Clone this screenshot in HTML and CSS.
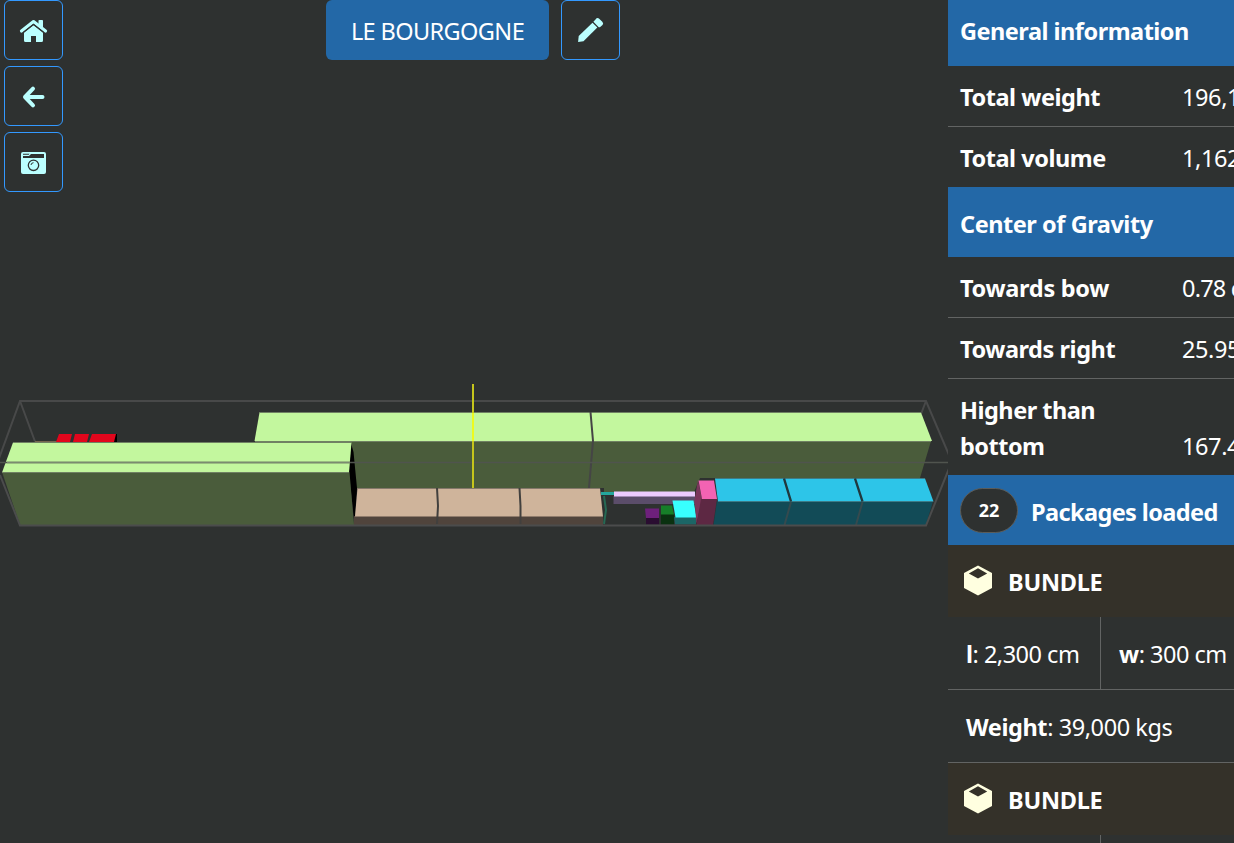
FILE: index.html
```html
<!DOCTYPE html>
<html lang="en">
<head>
<meta charset="utf-8">
<title>Le Bourgogne</title>
<link rel="stylesheet" href="styles.css">
</head>
<body>
<div class="app">
  <main class="viewer">
    <svg class="scene" width="948" height="843" viewBox="0 0 948 843">
      <g fill="none" stroke="#484949" stroke-width="2">
        <path d="M-6 472 20 401H926L952 462"/>
        <path d="M20 401 35 441.500M926 401 921 414"/>
      </g>
      <path d="M35 441.500H57" stroke="#75654f"/>
      <path d="M114 434h3v8h-4z" fill="#000"/>
      <path d="M59 434h13l-2 8H56zM75 434h14l-2 8H73zM92 434h24l-2 8H89z" fill="#e2061c"/>
      <path d="M255 441H931L920 478H700L694 492H604V488H355L351 441z" fill="#4a5c3b"/>
      <path d="M259.500 412.500H921L932 441H254.500z" fill="#c3f79e"/>
      <path d="M259 412.500H921M255 441.500H931" stroke="#708163"/>
      <path d="M590.500 412 593 441 589 488" fill="none" stroke="#454545" stroke-width="2"/>
      <path d="M351 443 353.500 452 357 488 354.500 524 349 473z" fill="#000"/>
      <path d="M2 472H349.500L354 525H20z" fill="#4a5c3b"/>
      <path d="M13 442.500H351.500L349 472.500H2z" fill="#c3f79e"/>
      <path d="M13 442.500H351M2 472.500H349" stroke="#708163"/>
      <path d="M0 462.500H948" stroke="#50544e" stroke-width="1.500"/>
      <path d="M7 462.500H350" stroke="#7b8b70" stroke-width="1.500"/>
      <path d="M354 516H603V525H354z" fill="#50443c"/>
      <path d="M357.500 488H600L603 516.500H355z" fill="#cfb49b"/>
      <path d="M357 488.500H600" stroke="#85786a"/>
      <path d="M437 488 438 506 437 524M519.500 488 520.500 506V524" fill="none" stroke="#42403e" stroke-width="2"/>
      <path d="M601 492h13v3h-13z" fill="#24a69c"/>
      <path d="M604 496 606 510 604 524" fill="none" stroke="#266954" stroke-width="2"/>
      <path d="M613.500 496H695V504H613.500z" fill="#5b4d6a"/>
      <path d="M614 491.500H695V496.500H614z" fill="#eccbff"/>
      <path d="M646 518h13v6.500h-13z" fill="#2a0d31"/>
      <path d="M645 508.500h14v9.500h-13z" fill="#6e207c"/>
      <path d="M661 514h13v10.500h-13z" fill="#0a3110"/>
      <path d="M661 505.500h11l2 9h-13z" fill="#167f28"/>
      <path d="M674 517h22v7.500h-21z" fill="#1b6666"/>
      <path d="M672.500 500.500h21l3 17h-21z" fill="#38ffff"/>
      <path d="M698 480 702 499 696.500 524 694.500 500z" fill="#7b365b"/>
      <path d="M701 499H717L713 525H696.500z" fill="#5d2843"/>
      <path d="M698.500 480.500H714L717 499H702z" fill="#f363b3"/>
      <path d="M717 501H933L926 525H713.500z" fill="#124b57"/>
      <path d="M715 478.500H925L933.500 501.500H718z" fill="#2dc5e8"/>
      <path d="M715 478.500H925M718 501.500H933" stroke="#3d7c87"/>
      <path d="M784 478.500 791 501.500M855 478.500 862.500 501.500" stroke="#20383e" stroke-width="2.400"/>
      <path d="M791 502 784.500 525M862.500 502 856 525" stroke="#354a4e" stroke-width="2"/>
      <path d="M0 475 20 525.500H926L950 466" fill="none" stroke="#4b4c4c" stroke-width="2"/>
      <path d="M473 384V488" stroke="#c5c51c" stroke-width="2"/>
      <path d="M473 413V441" stroke="#edfb20" stroke-width="2"/>
    </svg>
    <nav class="tools">
      <button class="icon-button" aria-label="Home">
        <svg width="31" height="30" viewBox="-.5 0 31 30"><path class="glyph" d="M20 4.800Q20 4 20.800 4H23.700Q24.500 4 24.500 4.800V14L20 10z"/><path class="line" d="M3 15 15 5.600 27 15" stroke-width="3.200"/><path class="glyph" d="M5.500 16.500 15 9.300 24.500 16.500V24.500Q24.500 26 23 26H17.500V20H12.500V26H7Q5.500 26 5.500 24.500z"/><path d="M4.500 16.700 15 8.400 25.500 16.700" fill="none" stroke="#2e3130" stroke-width="1.200"/></svg>
      </button>
      <button class="icon-button" aria-label="Back">
        <svg width="31" height="30" viewBox="-.5 0 31 30"><path class="line" d="M14.500 6.700 6.500 15 14.500 23.300M6.500 15H24" stroke-width="4"/></svg>
      </button>
      <button class="icon-button" aria-label="Capture">
        <svg width="31" height="30" viewBox="-.5 0 31 30"><rect class="glyph" x="2.500" y="4" width="25" height="22" rx="2"/><path class="cut" d="M4.500 10V8H10.500L12.500 6H25.500V10z"/><path class="cut" d="M4.500 5.700H11L10.300 6.800H4.500z"/><circle cx="15" cy="17.300" r="5.200" fill="none" stroke="#2e3130" stroke-width="1.300"/><path d="M12.500 17Q12.700 14.800 15 14.700" fill="none" stroke="#2e3130"/></svg>
      </button>
    </nav>
    <header class="title-bar">
      <button class="title">LE BOURGOGNE</button>
      <button class="icon-button" aria-label="Edit">
        <svg width="31" height="30" viewBox="-.5 0 31 30"><path class="glyph" d="M2.600 26 3.200 20 17 6.700 21.800 11.600 8 25.200z"/><path class="glyph" d="M17.900 5.800 20 3.600Q21.600 1.200 23.700 2.700L26.800 5.800Q28.500 7.400 27 9.100L24.700 11Q23.600 11.600 23 11z"/></svg>
      </button>
    </header>
  </main>
  <aside class="panel">
    <h2 class="heading first"><span class="t-general">General information</span></h2>
    <dl class="row"><dt>Total weight</dt><dd>196,1</dd></dl>
    <dl class="row last"><dt>Total volume</dt><dd>1,162</dd></dl>
    <h2 class="heading"><span>Center of Gravity</span></h2>
    <dl class="row"><dt class="t-bow">Towards bow</dt><dd class="v-bow">0.78 cm</dd></dl>
    <dl class="row"><dt>Towards right</dt><dd>25.95</dd></dl>
    <dl class="row tall"><dt class="t-higher">Higher than<br>bottom</dt><dd>167.4</dd></dl>
    <h2 class="heading packages"><span class="badge">22</span><span class="t-packages">Packages loaded</span></h2>
    <section class="package">
      <h3 class="bundle"><svg class="cube" width="30" height="32" viewBox="0 0 30 32"><path fill="#ffffe0" fill-rule="evenodd" d="M15 0.500 29 8V23L15 30.500 1 23V8zM15 3.300 5.800 8.500 15 13.500 24.200 8.500z"/></svg><span>BUNDLE</span></h3>
      <div class="dims"><div class="length"><b>l</b>: 2,300 cm</div><div class="width"><b>w</b>: 300 cm</div></div>
      <div class="load"><b>Weight</b>: 39,000 kgs</div>
    </section>
    <section class="package">
      <h3 class="bundle"><svg class="cube" width="30" height="32" viewBox="0 0 30 32"><path fill="#ffffe0" fill-rule="evenodd" d="M15 0.500 29 8V23L15 30.500 1 23V8zM15 3.300 5.800 8.500 15 13.500 24.200 8.500z"/></svg><span>BUNDLE</span></h3>
      <div class="dims"><div class="length"></div><div class="width"></div></div>
    </section>
  </aside>
</div>
</body>
</html>
```
FILE: styles.css
```css
* { box-sizing: border-box; }
body { margin: 0; overflow: hidden; background: #2e3130; color: #fff; font: 23.5px/36px "Noto Sans", "Open Sans", sans-serif; }
h2, h3, dl, dd { margin: 0; font-size: inherit; }
button { font: inherit; color: inherit; }
.app { display: grid; grid-template-columns: 948px 286px; height: 843px; overflow: hidden; }
.viewer { position: relative; overflow: hidden; }
.scene { display: block; }
.tools { position: absolute; top: 0; left: 4px; display: flex; flex-direction: column; gap: 6px; }
.title-bar { position: absolute; top: 0; left: 326px; display: flex; gap: 12px; }
.title { width: 223px; height: 60px; padding: 1px 0 0; border: 0; border-radius: 6px; background: #2368a7; letter-spacing: -.6px; white-space: nowrap; }
.icon-button { display: flex; align-items: center; justify-content: center; width: 59px; height: 60px; padding: 2px 0 0; border: 1px solid #3399ff; border-radius: 6px; background: #2e3130; }
.glyph { fill: #bff; }
.cut { fill: #2e3130; }
.line { fill: none; stroke: #bff; stroke-linecap: round; stroke-linejoin: round; }
.panel { overflow: hidden; white-space: nowrap; background: #2e3130; }
.heading { display: flex; height: 70px; padding: 19px 12px 0; background: #2368a7; letter-spacing: -.45px; }
.heading.first { height: 66px; padding-top: 13px; }
.t-general { letter-spacing: -.5px; }
.row { display: grid; grid-template-columns: 222px 1fr; align-items: end; height: 61px; padding: 13px 0 11px 12px; border-bottom: 1px solid #626463; }
.row.last { height: 60px; }
.row.tall { height: 96px; }
.row.last, .row.tall { border-bottom: 0; }
dt, b { font-weight: 700; }
dt { letter-spacing: -.45px; }
.t-bow { letter-spacing: -.3px; }
.t-higher { letter-spacing: -.5px; }
dd { letter-spacing: -.4px; }
.v-bow { letter-spacing: -.8px; }
.heading.packages { gap: 13px; padding-top: 13px; }
.packages > .t-packages { padding-top: 6px; letter-spacing: -.6px; }
.badge { flex: none; width: 58px; height: 45px; border: 1px solid #5b5c59; border-radius: 23px; background: #2e3130; font-size: 18px; line-height: 43px; text-align: center; letter-spacing: 0; }
.bundle { display: flex; align-items: center; height: 72px; padding-left: 15px; gap: 15px; background: #343129; }
.bundle span { padding-top: 2px; letter-spacing: -.25px; }
.dims { display: grid; grid-template-columns: 153px 133px; height: 73px; border-bottom: 1px solid #626463; }
.length { padding: 19px 0 0 18px; border-right: 1px solid #626463; }
.width { padding: 19px 0 0 18px; }
.load { height: 73px; padding: 19px 18px 0; border-bottom: 1px solid #626463; }
.length, .width { letter-spacing: -.5px; }
.load { letter-spacing: -.42px; }
```
